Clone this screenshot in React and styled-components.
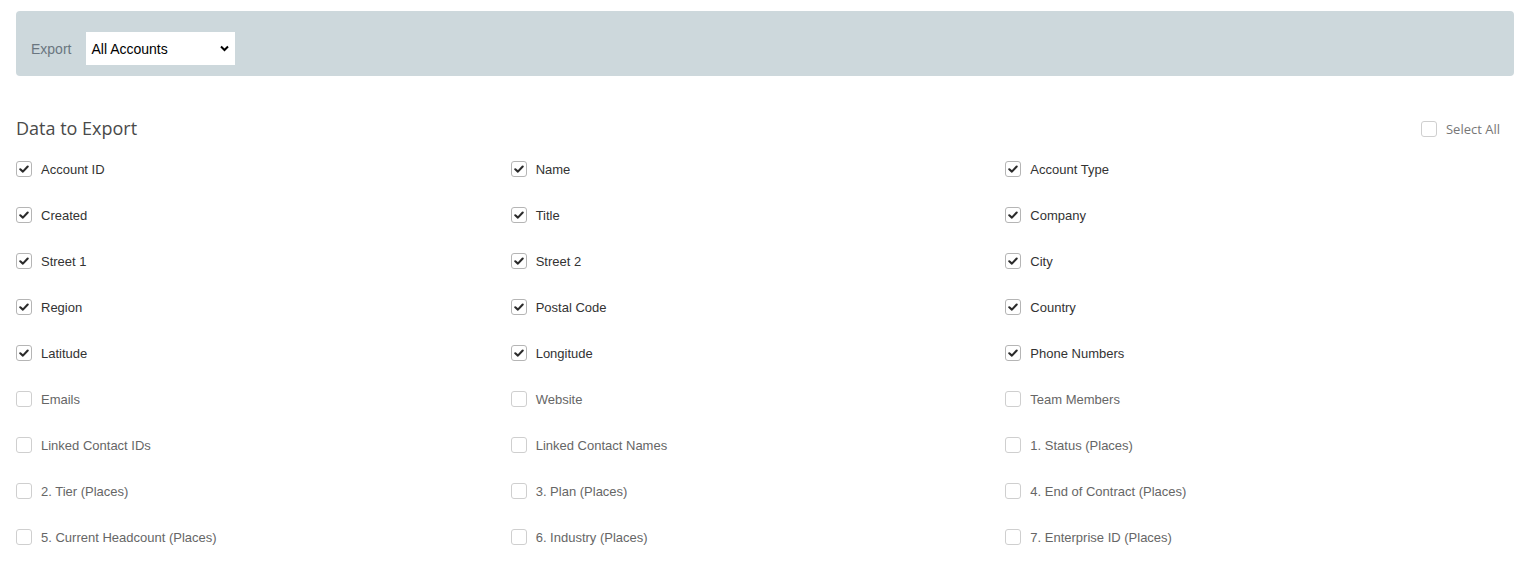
import React, { useState } from "react";
import styled, { createGlobalStyle } from "styled-components";

const Global = createGlobalStyle`
  html, body { margin: 0; padding: 0; background: #fff; }
  body { font-family: "Liberation Sans", Arial, sans-serif; }
  * { box-sizing: border-box; }
`;

const Page = styled.div`
  padding: 11px 16px 0 16px;
`;

const Toolbar = styled.div`
  background: #cdd8dc;
  border-radius: 4px;
  height: 65px;
  display: flex;
  align-items: flex-start;
  gap: 15px;
  padding: 21px 15px 0 15px;
`;

const ToolLabel = styled.label`
  font-family: "Liberation Sans", Arial, sans-serif;
  font-size: 14px;
  color: #6a7680;
  line-height: 34px;
`;

const SelectWrap = styled.div`
  position: relative;
  width: 149px;
  height: 33px;
`;

const Select = styled.select`
  appearance: none;
  -webkit-appearance: none;
  width: 100%;
  height: 100%;
  border: none;
  border-radius: 0;
  background: #fff;
  font-family: "Liberation Sans", Arial, sans-serif;
  font-size: 14px;
  color: #000;
  padding: 0 20px 0 5px;
  outline: none;
`;

const Chevron = styled.svg`
  position: absolute;
  right: 6px;
  top: 13px;
  pointer-events: none;
`;

const Header = styled.div`
  display: flex;
  align-items: center;
  justify-content: space-between;
  margin-top: 40px;
  padding-right: 14px;
  height: 24px;
`;

const Title = styled.h2`
  margin: 0;
  font-family: "Open Sans", sans-serif;
  font-weight: 400;
  font-size: 18px;
  color: #4a4a4a;
  line-height: 24px;
`;

const SelectAll = styled.label`
  display: flex;
  align-items: center;
  gap: 9px;
  margin-top: 2px;
  font-family: "Open Sans", sans-serif;
  font-size: 13px;
  color: #777;
  cursor: pointer;
`;

const Grid = styled.div`
  display: grid;
  grid-template-columns: repeat(3, 1fr);
  row-gap: 30px;
  margin-top: 21px;
  padding-right: 14px;
`;

const Item = styled.label`
  display: flex;
  align-items: center;
  gap: 9px;
  height: 16px;
  font-family: "Liberation Sans", Arial, sans-serif;
  font-size: 13px;
  color: ${(p) => (p.$checked ? "#333" : "#666")};
  cursor: pointer;
`;

const Box = styled.span`
  width: 16px;
  height: 16px;
  flex: none;
  border: 1px solid ${(p) => (p.$checked ? "#b5b5b5" : "#cfcfcf")};
  border-radius: 3px;
  background: #fff;
  display: flex;
  align-items: center;
  justify-content: center;
`;

function Check({ checked, onClick }) {
  return (
    <Box $checked={checked} onClick={onClick}>
      {checked && (
        <svg width="10" height="8" viewBox="0 0 10 8">
          <path d="M1.3 4.3 L3.9 6.6 L8.7 1.5" fill="none" stroke="#2b2b2b" strokeWidth="2.1" strokeLinecap="round" strokeLinejoin="round" />
        </svg>
      )}
    </Box>
  );
}

const fields = [
  ["Account ID", true], ["Name", true], ["Account Type", true],
  ["Created", true], ["Title", true], ["Company", true],
  ["Street 1", true], ["Street 2", true], ["City", true],
  ["Region", true], ["Postal Code", true], ["Country", true],
  ["Latitude", true], ["Longitude", true], ["Phone Numbers", true],
  ["Emails", false], ["Website", false], ["Team Members", false],
  ["Linked Contact IDs", false], ["Linked Contact Names", false], ["1. Status (Places)", false],
  ["2. Tier (Places)", false], ["3. Plan (Places)", false], ["4. End of Contract (Places)", false],
  ["5. Current Headcount (Places)", false], ["6. Industry (Places)", false], ["7. Enterprise ID (Places)", false],
];

export default function App() {
  const [state, setState] = useState(fields.map((f) => f[1]));
  const [all, setAll] = useState(false);
  const toggle = (i) => setState((s) => s.map((v, j) => (j === i ? !v : v)));
  return (
    <Page>
      <Global />
      <Toolbar>
        <ToolLabel>Export</ToolLabel>
        <SelectWrap>
          <Select defaultValue="all">
            <option value="all">All Accounts</option>
            <option value="mine">My Accounts</option>
          </Select>
          <Chevron width="9" height="7" viewBox="0 0 9 7">
            <path d="M1 1.5 L4.5 5 L8 1.5" fill="none" stroke="#000" strokeWidth="2" />
          </Chevron>
        </SelectWrap>
      </Toolbar>
      <Header>
        <Title>Data to Export</Title>
        <SelectAll>
          <Check checked={all} onClick={() => setAll(!all)} />
          Select All
        </SelectAll>
      </Header>
      <Grid>
        {fields.map(([name], i) => (
          <Item key={name} $checked={state[i]}>
            <Check checked={state[i]} onClick={() => toggle(i)} />
            {name}
          </Item>
        ))}
      </Grid>
    </Page>
  );
}
